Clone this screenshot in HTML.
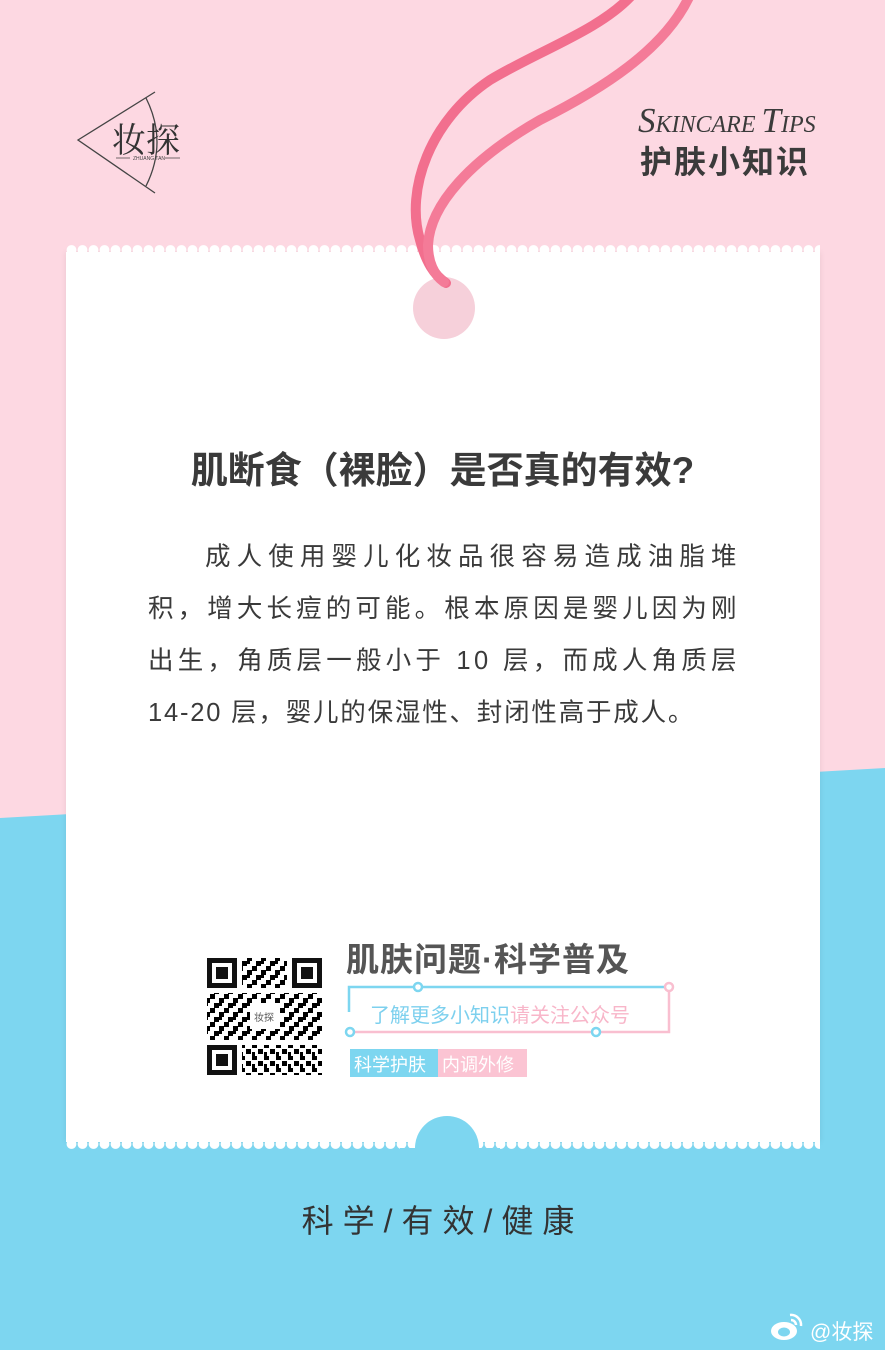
<!DOCTYPE html>
<html><head><meta charset="utf-8"><style>
*{margin:0;padding:0;box-sizing:border-box}
body{width:885px;height:1350px;overflow:hidden;position:relative;background:#fdd8e2;font-family:"Liberation Sans","Noto Sans CJK SC",sans-serif}
.abs{position:absolute}
.card{left:66px;top:252px;width:754px;height:890px;background:#fff;box-shadow:0 0 6px rgba(0,0,0,.08)}
.sc-top{left:66px;top:244px;width:754px;height:10px;background:radial-gradient(circle at 5.5px 6px,#fff 4.6px,transparent 5.2px);background-size:11px 10px}
.sc-bot{left:66px;top:1140px;width:754px;height:11px;background:radial-gradient(circle at 5.5px 4px,#fff 4.6px,transparent 5.2px);background-size:11px 11px}
.p{left:148px;width:592px;font-size:25.5px;color:#3a3a3a;letter-spacing:3.5px;line-height:52px;white-space:nowrap}
.j{text-align:justify;text-align-last:justify}
</style></head><body>
<svg class="abs" style="left:0;top:0" width="885" height="1350">
<polygon points="0,818 885,768 885,1350 0,1350" fill="#7dd6f0"/>
</svg>
<div class="abs card"></div>
<div class="abs sc-top"></div>
<div class="abs sc-bot"></div>
<svg class="abs" style="left:0;top:0" width="885" height="1350">
<circle cx="444" cy="308" r="31" fill="#f6d0da"/>
<circle cx="447" cy="1148" r="32" fill="#7dd6f0"/>
<rect x="400" y="1148" width="100" height="10" fill="#7dd6f0"/>
<g fill="none" stroke-linecap="round">
<path d="M632,-5 C600,30 540,50 490,80 C430,120 405,190 420,240 C426,262 434,275 446,283" stroke="#f26f8e" stroke-width="10"/>
<path d="M690,-5 C665,50 600,90 540,120 C470,160 430,205 428,245 C428,262 434,275 444,282" stroke="#f47b98" stroke-width="10"/>
</g>
<g stroke="#444" stroke-width="1.3" fill="none">
<path d="M155,92 L78,140 L155,193"/>
<path d="M146,98 Q168,142 146,186"/>
<path d="M116,158 H130 M165,158 H180" stroke-width="0.8"/>
</g>
<text x="112" y="152" font-family="Noto Serif CJK SC,serif" font-size="34" fill="#333">妆探</text>
<text x="133" y="160" font-size="5" fill="#444">ZHUANG TAN</text>
<g fill="#111">
<rect x="207" y="958" width="30" height="30"/><rect x="212" y="963" width="20" height="20" fill="#fff"/><rect x="216" y="967" width="12" height="12"/>
<rect x="292" y="958" width="30" height="30"/><rect x="297" y="963" width="20" height="20" fill="#fff"/><rect x="301" y="967" width="12" height="12"/>
<rect x="207" y="1045" width="30" height="30"/><rect x="212" y="1050" width="20" height="20" fill="#fff"/><rect x="216" y="1054" width="12" height="12"/>
</g>
<rect x="242" y="958" width="45" height="30" fill="url(#qp)"/>
<rect x="207" y="993" width="115" height="47" fill="url(#qp)"/>
<rect x="242" y="1045" width="80" height="30" fill="url(#qp2)"/>
<defs>
<pattern id="qp" width="14" height="14" patternUnits="userSpaceOnUse"><rect width="5" height="5"/><rect x="9" y="4" width="5" height="5"/><rect x="4" y="9" width="5" height="5"/><rect x="9" y="9" width="3" height="3"/></pattern>
<pattern id="qp2" width="12" height="12" patternUnits="userSpaceOnUse"><rect width="5" height="4"/><rect x="6" y="5" width="5" height="5"/><rect x="0" y="8" width="3" height="4"/></pattern>
</defs>
<rect x="250" y="1003" width="30" height="26" fill="#fff"/>
<text x="254" y="1021" font-size="10" fill="#555">妆探</text>
<g fill="none" stroke-width="2.5">
<path d="M349,1012 V987 H665" stroke="#7dd6f0"/>
<path d="M669,990 V1032 H350" stroke="#f9bfd0"/>
<circle cx="418" cy="987" r="4" stroke="#7dd6f0" fill="#fff"/>
<circle cx="669" cy="987" r="4" stroke="#f9bfd0" fill="#fff"/>
<circle cx="350" cy="1032" r="4" stroke="#7dd6f0" fill="#fff"/>
<circle cx="596" cy="1032" r="4" stroke="#7dd6f0" fill="#fff"/>
</g>
<rect x="350" y="1049" width="88" height="28" fill="#7dd6f0"/>
<rect x="438" y="1049" width="89" height="28" fill="#fbc4d3"/>
<g fill="#fff"><ellipse cx="784" cy="1331" rx="13" ry="9"/></g>
<ellipse cx="784" cy="1332" rx="6" ry="4.5" fill="#7dd6f0"/>
<path d="M790,1315 a10,10 0 0 1 11,11 M791,1320 a5,5 0 0 1 5,5" stroke="#fff" stroke-width="2.5" fill="none"/>
</svg>
<div class="abs" style="left:638px;top:101px;font-family:'Liberation Serif',serif;font-style:italic;color:#3b3b3b;font-size:35px;letter-spacing:0"><span>S</span><span style="font-size:24px">KINCARE </span><span>T</span><span style="font-size:24px">IPS</span></div>
<div class="abs" style="left:640px;top:137px;font-size:32px;font-weight:bold;color:#3b3b3b;letter-spacing:2px">护肤小知识</div>
<div class="abs" style="left:0;width:885px;top:440px;text-align:center;font-size:37px;font-weight:bold;color:#3a3a3a">肌断食（裸脸）是否真的有效?</div>
<div class="abs p j" style="top:531px;padding-left:57px">成人使用婴儿化妆品很容易造成油脂堆</div>
<div class="abs p j" style="top:583px">积，增大长痘的可能。根本原因是婴儿因为刚</div>
<div class="abs p j" style="top:635px">出生，角质层一般小于 10 层，而成人角质层</div>
<div class="abs p" style="top:687px;letter-spacing:1.8px">14-20 层，婴儿的保湿性、封闭性高于成人。</div>
<div class="abs" style="left:346px;top:933px;font-size:33px;font-weight:bold;color:#555;letter-spacing:1px">肌肤问题·科学普及</div>
<div class="abs" style="left:370px;top:999px;font-size:20px;color:#7dd0ee">了解更多小知识<span style="color:#f8b6c9">请关注公众号</span></div>
<div class="abs" style="left:354px;top:1051px;font-size:18px;color:#fff">科学护肤</div>
<div class="abs" style="left:442px;top:1051px;font-size:18px;color:#fff">内调外修</div>
<div class="abs" style="left:0;width:885px;top:1196px;text-align:center;font-size:32px;color:#333;letter-spacing:9px">科学/有效/健康</div>
<div class="abs" style="left:810px;top:1316px;font-size:21px;color:#fff">@妆探</div>
</body></html>
